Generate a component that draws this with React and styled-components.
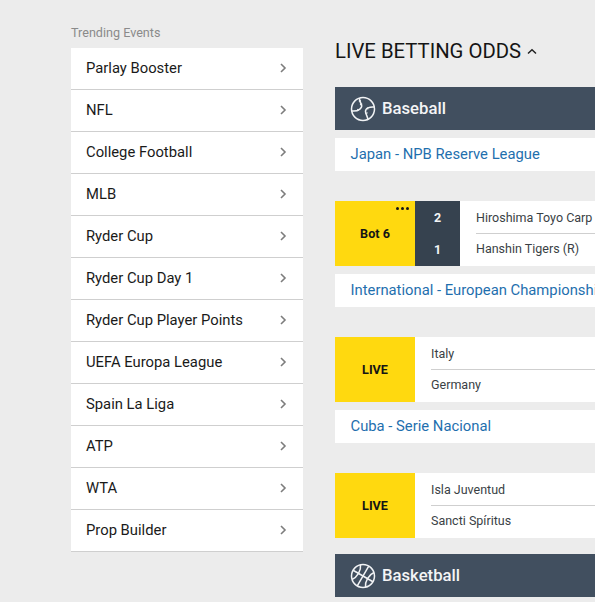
import React from 'react';
import styled, { createGlobalStyle } from 'styled-components';

const Global = createGlobalStyle`
  html, body { margin: 0; padding: 0; background: #ececec; overflow: hidden; height: 602px; }
  * { box-sizing: border-box; }
  body { font-family: Roboto, "Liberation Sans", sans-serif; }
`;
const Page = styled.div`
  display: flex; width: 595px; height: 602px; overflow: hidden; padding-left: 71px; gap: 32px;
`;
const Sidebar = styled.aside`
  width: 232px; flex: none; padding-top: 25px;
`;
const SideTitle = styled.div`
  font-size: 12.6px; line-height: 15px; height: 23px; color: #8a8a8a;
`;
const SideList = styled.div`background: #fff;`;
const SideRow = styled.div`
  height: 42px; display: flex; align-items: center; justify-content: space-between;
  padding: 0 16px 1px 15px; border-bottom: 1px solid #cfcfcf;
  font-size: 14.8px; color: #1a1a1a;
`;
const Main = styled.main`
  width: 400px; flex: none; padding-top: 39px;
`;
const Heading = styled.h2`
  margin: 0 0 24px; font-size: 20.3px; line-height: 24px; font-weight: 400; color: #151515;
  display: flex; align-items: center; gap: 6px; white-space: nowrap;
`;
const SportBar = styled.div`
  height: 43px; background: #414f5f; color: #f4f5f6; display: flex; align-items: center;
  gap: 6px; padding: 0 0 1px 15px; font-size: 16.7px; font-weight: 500;
  margin-top: ${p => p.$top || 0}px;
  svg { margin-top: 1px; }
`;
const League = styled.div`
  height: 33px; background: #fff; margin-top: 8px; padding: 0 0 2px 15.500px;
  display: flex; align-items: center; font-size: 14.8px; color: #1f6fae; white-space: nowrap;
`;
const Match = styled.div`
  height: 65px; display: flex; margin-top: ${p => p.$top || 30}px; background: #fff;
`;
const Status = styled.div`
  position: relative; width: 80px; flex: none; background: #ffd90f; display: flex;
  align-items: center; justify-content: center; font-size: 12.6px; font-weight: 700; color: #151515;
`;
const Dots = styled.span`
  position: absolute; top: 6px; right: 6px; display: flex; gap: 2px;
  i { width: 3px; height: 3px; background: #151515; border-radius: 50%; }
`;
const Scores = styled.div`
  width: 45px; flex: none; background: #36424f; color: #f4f5f6; display: flex; flex-direction: column;
  align-items: center; justify-content: space-around; font-size: 12.5px; font-weight: 700;
  padding: 0 0 1px;
`;
const Teams = styled.div`
  flex: 1; display: flex; flex-direction: column; padding-left: 16px;
`;
const Team = styled.div`
  flex: 0 0 32px; display: flex; align-items: center; font-size: 12.5px; color: #3a3f45; white-space: pre;
  & + & { flex: 0 0 33px; border-top: 1px solid #cfcfcf; padding-bottom: 4px; }
`;

const Chevron = () => (
  <svg width="8" height="12" viewBox="0 0 8 12" fill="none" stroke="#7d7d7d" strokeWidth="1.600"><path d="M2 2l4 4-4 4" /></svg>
);
const Caret = () => (
  <svg width="10" height="7" viewBox="0 0 10 7" fill="none" stroke="#222" strokeWidth="1.500"><path d="M1 5.500 5 1.800l4 3.700" /></svg>
);
const Baseball = () => (
  <svg width="26" height="26" viewBox="0 0 26 26" fill="none" stroke="#f1f3f5" strokeWidth="1.500">
    <circle cx="13" cy="13" r="11.500" />
    <path d="M9.500 2c-.4 2.500.8 4.500 1.800 6.300 1.500 3-2 7.500-9.800 6.700" />
    <path d="M24.500 11c-5-.5-9.300 1.300-9 4.700.2 2.700 2.300 5 2.500 8.300" />
    <path d="M8.800 5.200l2-.7M10 8.700l2.200-1M15.600 17.500l2-.8M7.500 13l.8 1.700M17.500 11.500l.5 1.800" strokeWidth="1.100" />
  </svg>
);
const Basketball = () => (
  <svg width="26" height="26" viewBox="0 0 26 26" fill="none" stroke="#f1f3f5" strokeWidth="1.500">
    <circle cx="13" cy="13" r="11.500" />
    <g transform="rotate(30 13 13)">
      <path d="M13 1.500v23M1.500 13h23" />
      <path d="M5.200 4.500c3.500 4.500 3.500 12.500 0 17M20.800 4.500c-3.500 4.500-3.500 12.500 0 17" />
    </g>
  </svg>
);

const trending = ['Parlay Booster','NFL','College Football','MLB','Ryder Cup','Ryder Cup Day 1','Ryder Cup Player Points','UEFA Europa League','Spain La Liga','ATP','WTA','Prop Builder'];

export default function App() {
  return (
    <>
      <Global />
      <Page>
        <Sidebar>
          <SideTitle>Trending Events</SideTitle>
          <SideList>
            {trending.map(t => <SideRow key={t}>{t}<Chevron /></SideRow>)}
          </SideList>
        </Sidebar>
        <Main>
          <Heading>LIVE BETTING ODDS <Caret /></Heading>
          <SportBar><Baseball />Baseball</SportBar>
          <League>Japan - NPB Reserve League</League>
          <Match>
            <Status>Bot 6<Dots><i /><i /><i /></Dots></Status>
            <Scores><span>2</span><span>1</span></Scores>
            <Teams><Team>Hiroshima Toyo Carp (R)</Team><Team>Hanshin Tigers (R)</Team></Teams>
          </Match>
          <League>International - European Championship</League>
          <Match>
            <Status>LIVE</Status>
            <Teams><Team>Italy</Team><Team>Germany</Team></Teams>
          </Match>
          <League>Cuba - Serie Nacional</League>
          <Match>
            <Status>LIVE</Status>
            <Teams><Team>Isla Juventud</Team><Team>Sancti Spíritus</Team></Teams>
          </Match>
          <SportBar $top={16}><Basketball />Basketball</SportBar>
        </Main>
      </Page>
    </>
  );
}
